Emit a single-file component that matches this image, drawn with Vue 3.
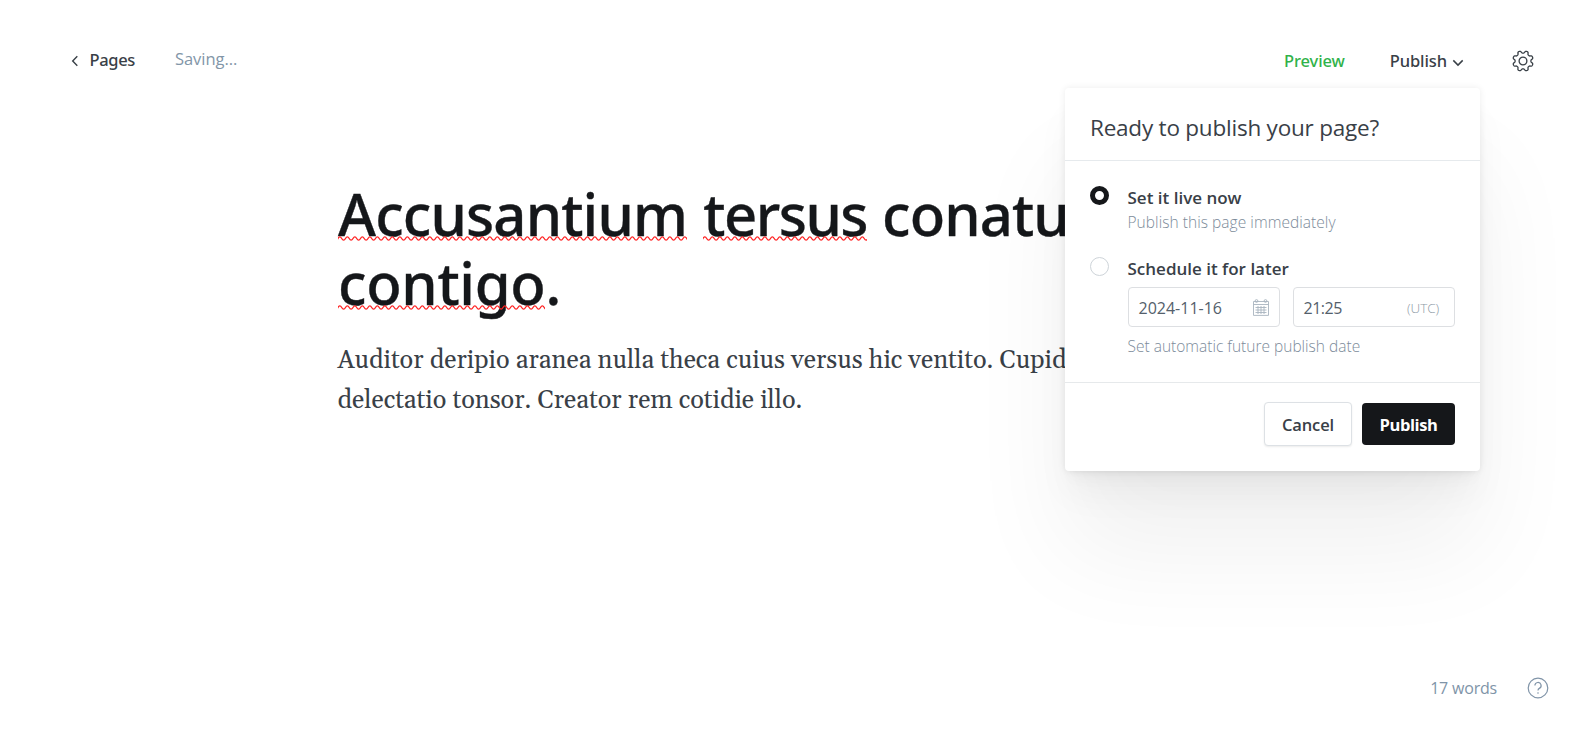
<script setup>
// Eight-tooth gear outline with a notch at each compass point
const gear = Array.from({ length: 161 }, (_, i) => {
  const a = (i / 160) * Math.PI * 2
  const r = 9.1 - 1.25 * Math.tanh(1.8 * Math.cos(8 * a))
  return `${i ? 'L' : 'M'}${(11 + r * Math.sin(a)).toFixed(2)} ${(11 - r * Math.cos(a)).toFixed(2)}`
}).join('') + 'Z'

// Squiggle under misspelt words, one wave every 7.5px
const squiggle = 'M-1.9 4.2' + Array.from({ length: 60 }, (_, i) => `C${i * 7.5} 4.2 ${i * 7.5} .8 ${i * 7.5 + 1.85} .8S${i * 7.5 + 3.7} 4.2 ${i * 7.5 + 5.6} 4.2`).join('')
</script>
<template>
  <div class="app">
    <header class="bar">
      <a class="back"><svg width="8" height="12" viewBox="0 0 8 12"><path d="M6.3 1.3 1.7 6l4.6 4.7" /></svg><span>Pages</span></a>
      <div class="status">Saving...</div>
      <div class="grow"></div>
      <a class="preview">Preview</a>
      <a class="menu"><span>Publish</span><svg width="12" height="8" viewBox="0 0 12 8"><path d="M1.3 1.4 6 6.1l4.7-4.7" /></svg></a>
      <svg class="gear" width="22" height="22" viewBox="0 0 22 22"><path :d="gear" /><circle cx="11" cy="11" r="3.9" /></svg>
    </header>

    <main class="editor">
      <h1><span class="w1 bad">Accusantium<svg><path :d="squiggle" /></svg></span> <span class="w2 bad">tersus<svg><path :d="squiggle" /></svg></span> <span class="w3">conatus</span><br><span class="w4 bad">contigo<svg><path :d="squiggle" /></svg></span><span class="dot">.</span></h1>
      <p>Auditor deripio aranea nulla theca cuius versus hic ventito. Cupid<br>delectatio tonsor. Creator rem cotidie illo.</p>
    </main>

    <section class="pop">
      <h3>Ready to publish your page?</h3>
      <div class="opts">
        <div class="opt o1"><i class="radio on"></i><div><b>Set it live now</b><small>Publish this page immediately</small></div></div>
        <div class="opt o2"><i class="radio"></i><div><b>Schedule it for later</b>
          <div class="fields">
            <div class="field date"><span>2024-11-16</span><svg width="16" height="17" viewBox="0 0 16 17"><path d="M.5 2.5h15v13.9H.5zM.5 5.5h15M2.5 8.5h11M2.5 11h11M2.5 13.5h11M5 7v8M8 7v8M11 7v8" /><circle cx="3.5" cy="2" r="1.4" /><circle cx="12.5" cy="2" r="1.4" /></svg></div>
            <div class="field time"><span>21:25</span><em>(UTC)</em></div>
          </div>
          <small>Set automatic future publish date</small></div></div>
      </div>
      <footer><button class="cancel">Cancel</button><button class="go">Publish</button></footer>
    </section>

    <div class="foot"><span class="count">17 words</span><svg width="22" height="22" viewBox="0 0 22 22"><circle cx="11" cy="11" r="9.8" /><path d="M7.9 8.6a3.1 3.1 0 1 1 4.4 2.8c-.9.45-1.3.9-1.3 2.2" /><circle class="pt" cx="11" cy="16" r=".8" /></svg></div>
  </div>
</template>
<style>
body { margin: 0; background: #fff; }
</style>
<style scoped>
.app { position: relative; box-sizing: border-box; height: 750px; overflow: hidden; display: flex; flex-direction: column; font-family: "Open Sans", sans-serif; font-size: 16px; color: #394047; }
svg { fill: none; stroke: currentColor; display: block; flex: none; }
.bar { display: flex; align-items: center; height: 122px; padding: 0 49px 0 71px; line-height: 24px; }
.back { display: flex; align-items: center; gap: 10.5px; font-family: "Noto Sans", sans-serif; font-weight: 500; font-size: 16.5px; letter-spacing: -.35px; }
.back svg { stroke-width: 1.4; }
.back span { padding-bottom: 2px; }
.status { padding-bottom: 4px; margin-left: 40px; color: #8296a8; font-size: 16.5px; letter-spacing: -.05px; }
.grow { flex: 1; }
.preview, .menu { font-family: "Noto Sans", sans-serif; font-weight: 500; font-size: 16.5px; letter-spacing: -.1px; }
.preview { color: #30b24a; margin-right: 45px; }
.menu { display: flex; align-items: center; gap: 5px; margin-right: 48px; }
.menu svg { stroke-width: 1.5; margin-top: 4px; }
.gear { stroke-width: 1.3; }
.editor { padding: 57px 0 0 338px; white-space: nowrap; }
h1 { margin: 0; font-family: "Noto Sans", sans-serif; font-size: 58px; line-height: 69px; font-weight: 500; color: #15171a; -webkit-text-stroke: .35px #15171a; }
.w1 { letter-spacing: -.83px; }
.w2 { letter-spacing: -1.5px; margin-left: 1px; }
.w3 { letter-spacing: -.9px; }
.w4 { letter-spacing: -.3px; }
.bad { position: relative; display: inline-block; }
.bad svg { position: absolute; left: 0; top: 57px; width: 100%; height: 5px; stroke: #f22; stroke-width: 1.3; }
.editor p { margin: 24px 0 0 -.5px; font: 25.28px/40px Gelasio, Georgia, "Liberation Serif", serif; color: #394047; }
.pop { position: absolute; left: 1065px; top: 88px; width: 415px; height: 383px; box-sizing: border-box; background: #fff; border-radius: 4px; display: flex; flex-direction: column;
  box-shadow: 0 0 7px rgba(0,0,0,.08), 0 2.1px 2.2px -5px rgba(0,0,0,.022), 0 5.1px 5.3px -5px rgba(0,0,0,.03), 0 12px 14px -5px rgba(0,0,0,.03), 0 26px 36px -4px rgba(0,0,0,.045), 0 80px 105px rgba(0,0,0,.06); }
.pop h3 { margin: 0; height: 73px; box-sizing: border-box; border-bottom: 1px solid #e6eaed; padding: 24px 25px 0; font-size: 22.5px; line-height: 32px; font-weight: 400; letter-spacing: -.22px; }
.opts { padding: 24px 25px 0; height: 221px; box-sizing: border-box; }
.opt { display: flex; gap: 19px; }
.opt + .opt { margin-top: 23px; }
.opt > div { flex: 1; margin-left: -.5px; }
.radio { box-sizing: border-box; width: 19px; height: 19px; border: 1px solid #ced4d9; border-radius: 50%; margin-top: 1px; }
.radio.on { border: 5.5px solid #15171a; }
b { display: block; font-weight: 600; font-size: 17px; line-height: 26px; }
small { display: block; font-size: 15.5px; line-height: 22px; font-weight: 300; color: #7c8b9a; }
.o1 small { letter-spacing: .05px; }
.fields { display: flex; gap: 13px; margin: 5px 0 8px .5px; }
.field { box-sizing: border-box; height: 40px; border: 1px solid #dddfe2; border-radius: 4px; display: flex; align-items: center; justify-content: space-between; padding: 0 10px 0 9.5px; color: #54606b; }
.field span, .field em { padding-top: 2px; }
.date { width: 152px; }
.date svg { color: #a9b4bf; stroke-width: .9; }
.time { width: 162px; padding-right: 15px; }
.time span { letter-spacing: -.5px; }
.time em { font-style: normal; font-weight: 300; font-size: 13.5px; color: #8e9aa6; letter-spacing: -.1px; }
footer { flex: 1; border-top: 1px solid #e6e9eb; display: flex; justify-content: flex-end; gap: 10px; padding: 19px 25px 0; align-items: flex-start; }
button { box-sizing: border-box; font: 600 16.5px/24px "Open Sans", sans-serif; letter-spacing: -.15px; color: #394047; background: #fff; border: 1px solid #dde1e5; border-radius: 4px; height: 44px; width: 88px; padding: 2px 0 0; box-shadow: 0 1px 2px rgba(0,0,0,.08); }
.go { width: 93px; height: 42px; margin-top: 1px; background: #15171a; color: #fff; border: 0; font-weight: 700; letter-spacing: -.4px; box-shadow: none; }
.foot { position: absolute; right: 34px; bottom: 50px; display: flex; align-items: center; gap: 30px; color: #8094a8; line-height: 24px; }
.count { letter-spacing: -.2px; }
.foot svg { stroke-width: 1.2; }
.foot .pt { fill: currentColor; stroke: none; }
</style>
